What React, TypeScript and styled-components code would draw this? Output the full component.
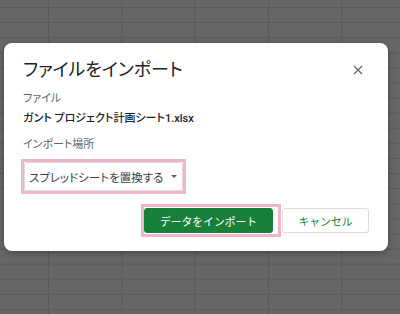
import React from 'react';
import styled, { createGlobalStyle } from 'styled-components';

const GlobalStyle = createGlobalStyle`
  html, body {
    margin: 0;
    padding: 0;
  }
  body {
    font-family: Roboto, "Noto Sans CJK JP", "Liberation Sans", sans-serif;
    font-feature-settings: "palt";
  }
`;

// spreadsheet grid showing through the dim overlay
const Backdrop = styled.div`
  width: 400px;
  height: 314px;
  box-sizing: border-box;
  padding: 43px 12px 0 4px;
  background-color: #666666;
  background-image:
    linear-gradient(to right, #595959 1px, transparent 1px),
    linear-gradient(to bottom, #595959 1px, transparent 1px);
  background-size: 73.3px 15.1px;
  background-position: 48px 7px;
  overflow: hidden;
`;

const Dialog = styled.div`
  width: 384px;
  height: 208px;
  box-sizing: border-box;
  background: #ffffff;
  border-radius: 8px;
  padding: 16px 19px 0 19px;
  box-shadow: 0 2px 6px rgba(0, 0, 0, 0.3);
  display: flex;
  flex-direction: column;
`;

const Header = styled.div`
  display: flex;
  align-items: center;
  justify-content: space-between;
  height: 22px;
`;

const Title = styled.h1`
  margin: 0;
  font-size: 18px;
  font-weight: 400;
  color: #202124;
  line-height: 22px;
`;

const CloseButton = styled.button`
  border: 0;
  background: none;
  padding: 0;
  width: 14px;
  height: 14px;
  display: flex;
  align-items: center;
  justify-content: center;
  margin-right: 4px;
  cursor: pointer;
`;

const Label = styled.div<{ $top: number }>`
  margin-top: ${(p) => p.$top}px;
  font-size: 11px;
  line-height: 14px;
  color: #5f6368;
`;

const FileName = styled.div`
  margin-top: 5px;
  font-size: 11px;
  font-weight: 500;
  line-height: 16px;
  color: #202124;
`;

const Highlight = styled.div<{ $pad: string }>`
  display: flex;
  border: 3px solid #f2b3cd;
  padding: ${(p) => p.$pad};
`;

const DropWrap = styled.div`
  margin-top: 7px;
  margin-left: -2px;
  display: flex;
`;

const Select = styled.div`
  width: 159px;
  height: 29px;
  box-sizing: border-box;
  border: 1px solid #dadce0;
  border-radius: 2px;
  display: flex;
  align-items: center;
  padding-left: 4px;
  gap: 8px;
  font-size: 11.5px;
  white-space: nowrap;
  color: #3c4043;
`;

const Caret = styled.span`
  width: 0;
  height: 0;
  border-left: 3px solid transparent;
  border-right: 3px solid transparent;
  border-top: 3px solid #5f6368;
`;

const Actions = styled.div`
  margin-top: 10px;
  display: flex;
  justify-content: flex-end;
  align-items: center;
  gap: 1px;
`;

const Button = styled.button<{ $primary?: boolean }>`
  height: 25px;
  box-sizing: border-box;
  border-radius: 3px;
  font-family: inherit;
  font-size: 10.8px;
  display: flex;
  align-items: center;
  justify-content: center;
  cursor: pointer;
  padding: 0;
  border: 1px solid ${(p) => (p.$primary ? '#188038' : '#dadce0')};
  background: ${(p) => (p.$primary ? '#188038' : '#ffffff')};
  color: ${(p) => (p.$primary ? '#ffffff' : '#188038')};
  width: ${(p) => (p.$primary ? '129px' : '87px')};
`;

export default function App() {
  return (
    <>
      <GlobalStyle />
      <Backdrop>
        <Dialog>
          <Header>
            <Title>ファイルをインポート</Title>
            <CloseButton aria-label="閉じる">
              <svg width="10" height="10" viewBox="0 0 10 10">
                <path d="M1 1L9 9M9 1L1 9" stroke="#5f6368" strokeWidth="1.2" />
              </svg>
            </CloseButton>
          </Header>
          <Label $top={11}>ファイル</Label>
          <FileName>ガント プロジェクト計画シート1.xlsx</FileName>
          <Label $top={11}>インポート場所</Label>
          <DropWrap>
            <Highlight $pad="0">
              <Select>
                スプレッドシートを置換する
                <Caret />
              </Select>
            </Highlight>
          </DropWrap>
          <Actions>
            <Highlight $pad="1px 5px 1px 0">
              <Button $primary>データをインポート</Button>
            </Highlight>
            <Button>キャンセル</Button>
          </Actions>
        </Dialog>
      </Backdrop>
    </>
  );
}
